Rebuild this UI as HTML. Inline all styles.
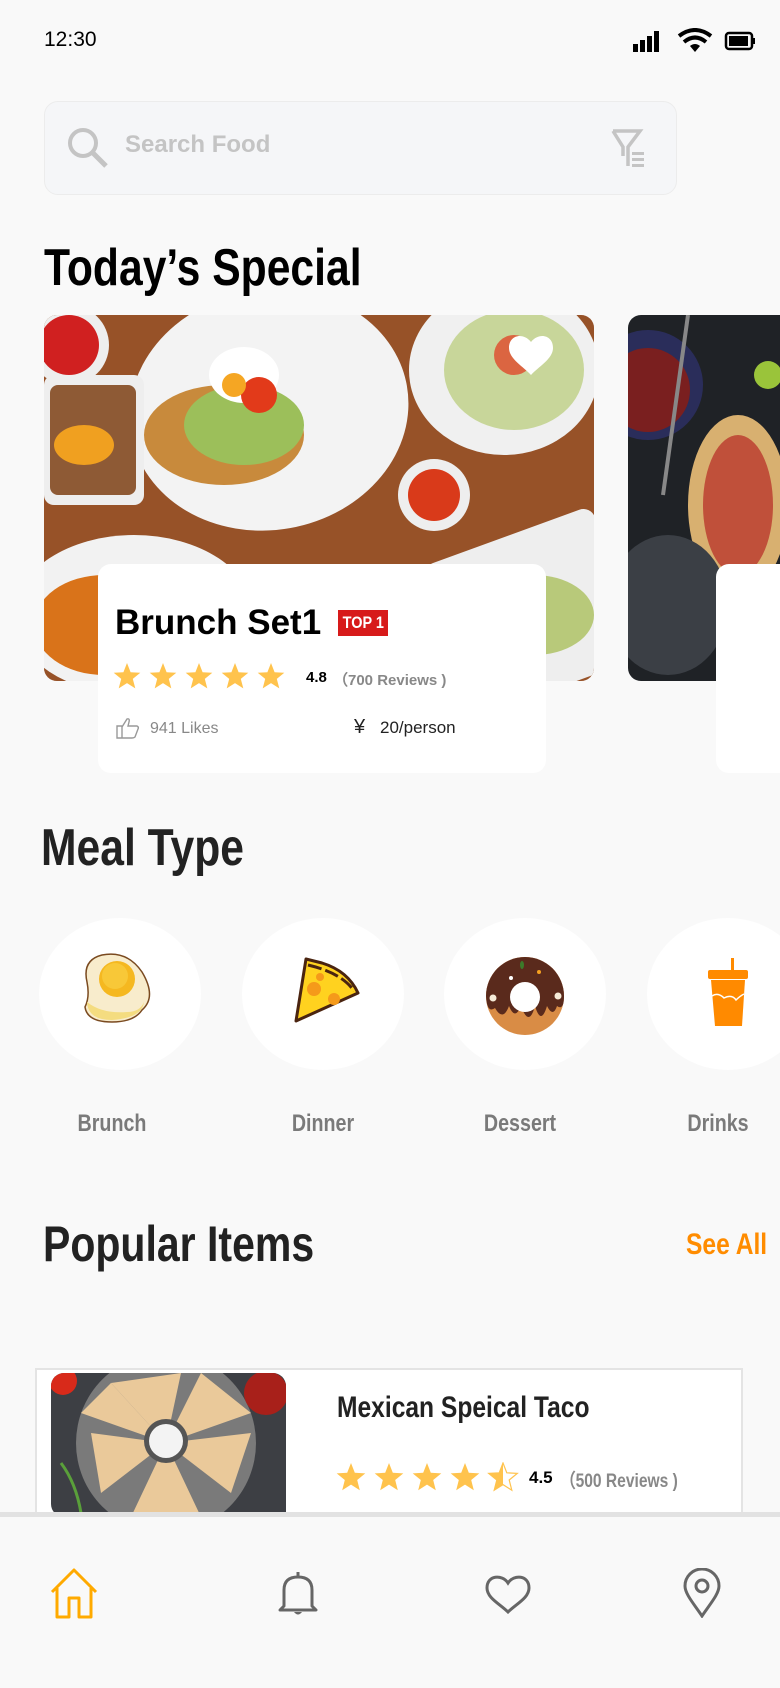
<!DOCTYPE html>
<html><head><meta charset="utf-8">
<style>
*{margin:0;padding:0;box-sizing:border-box}
body{width:780px;height:1688px;background:#f9f9f9;position:relative;overflow:hidden;font-family:"Liberation Sans",sans-serif}
.a{position:absolute}
.n{font-family:"Liberation Sans Narrow","Liberation Sans",sans-serif;font-weight:bold;white-space:nowrap}
.sx{transform:scaleX(.82);transform-origin:0 0}
.circ{position:absolute;width:162px;height:152px;border-radius:50%;background:#fff}
.lbl{position:absolute;top:1110px;width:140px;text-align:center;font-size:24px;color:#7a7a7a;transform:scaleX(.82);transform-origin:50% 0}
</style></head><body>
<div class="a" style="left:44px;top:28px;font-size:21px;color:#000">12:30</div>
<svg class="a" style="left:633px;top:28px" width="124" height="26" viewBox="0 0 124 26">
<rect x="0" y="16" width="5" height="8" fill="#000"/><rect x="7" y="12" width="5" height="12" fill="#000"/><rect x="14" y="8" width="5" height="16" fill="#000"/><rect x="21" y="3" width="5" height="21" fill="#000"/>
<path d="M46 8 Q62 -4 78 8" stroke="#000" stroke-width="4" fill="none"/><path d="M51 14 Q62 5 73 14" stroke="#000" stroke-width="4" fill="none"/><path d="M57 18 L62 24 L67 18 Q62 14 57 18Z" fill="#000"/>
<rect x="93" y="5" width="26" height="16" rx="3" stroke="#000" stroke-width="2.5" fill="none"/><rect x="96" y="8" width="19" height="10" fill="#000"/><rect x="120" y="10" width="2" height="6" fill="#000"/>
</svg>
<div class="a" style="left:44px;top:101px;width:633px;height:94px;border-radius:14px;background:#f5f6f8;border:1.5px solid #ececec"></div>
<svg class="a" style="left:66px;top:126px" width="44" height="44" viewBox="0 0 44 44"><circle cx="17" cy="17" r="13" stroke="#c4c4c4" stroke-width="4" fill="none"/><path d="M27 27 L40 40" stroke="#c4c4c4" stroke-width="5"/></svg>
<div class="a n" style="left:125px;top:131px;font-size:24px;color:#c4c4c4">Search Food</div>
<svg class="a" style="left:610px;top:128px" width="40" height="42" viewBox="0 0 40 42"><path d="M3 3 H30 L18 19 V38 M3 3 L13 19 V28" stroke="#c4c4c4" stroke-width="3.5" fill="none"/><rect x="22" y="24" width="12" height="3" fill="#c4c4c4"/><rect x="22" y="30" width="12" height="3" fill="#c4c4c4"/><rect x="22" y="36" width="12" height="3" fill="#c4c4c4"/></svg>
<div class="a n sx" style="left:44px;top:238px;font-size:52px;color:#000">Today’s Special</div>

<svg class="a" style="left:44px;top:315px;border-radius:13px" width="550" height="366" viewBox="0 0 550 366">
<rect width="550" height="366" fill="#8a4a25"/>
<rect x="0" y="0" width="550" height="366" fill="#a35a2c" opacity=".5"/>
<ellipse cx="225" cy="95" rx="140" ry="120" fill="#f3f3f3" transform="rotate(-10 225 95)"/>
<ellipse cx="180" cy="120" rx="80" ry="50" fill="#c88a3c"/>
<ellipse cx="200" cy="110" rx="60" ry="40" fill="#9cbf5a"/>
<ellipse cx="200" cy="60" rx="35" ry="28" fill="#fff"/>
<circle cx="215" cy="80" r="18" fill="#e23a1a"/><circle cx="190" cy="70" r="12" fill="#f5a623"/>
<ellipse cx="460" cy="55" rx="95" ry="85" fill="#f0f0f0"/>
<ellipse cx="470" cy="55" rx="70" ry="60" fill="#c8d69a"/><circle cx="470" cy="40" r="20" fill="#e0482a" opacity=".8"/>
<rect x="0" y="60" width="100" height="130" rx="10" fill="#eee"/><rect x="6" y="70" width="86" height="110" rx="8" fill="#8e5a35"/><ellipse cx="40" cy="130" rx="30" ry="20" fill="#f0a020"/>
<circle cx="25" cy="30" r="40" fill="#eee"/><circle cx="25" cy="30" r="30" fill="#d02020"/>
<circle cx="390" cy="180" r="36" fill="#eee"/><circle cx="390" cy="180" r="26" fill="#d93a1a"/>
<ellipse cx="90" cy="300" rx="120" ry="80" fill="#f2f2f2"/><ellipse cx="60" cy="310" rx="70" ry="50" fill="#d9731a"/>
<rect x="400" y="220" width="180" height="160" rx="12" fill="#eee" transform="rotate(-20 480 300)"/><ellipse cx="490" cy="300" rx="60" ry="40" fill="#b8c97a"/>
<path d="M487 27 C479 17 465 20 465 33 C465 44 480 52 487 60 C494 52 509 44 509 33 C509 20 495 17 487 27Z" fill="#fff"/>
</svg>
<svg class="a" style="left:628px;top:315px;border-radius:13px 0 0 13px" width="152" height="366" viewBox="0 0 152 366">
<rect width="152" height="366" fill="#1f2226"/>
<circle cx="20" cy="70" r="55" fill="#2a2d5a"/><circle cx="20" cy="75" r="42" fill="#7a1f1f"/>
<path d="M60 0 L35 180" stroke="#888" stroke-width="4"/>
<ellipse cx="110" cy="190" rx="50" ry="90" fill="#d8b070"/><ellipse cx="110" cy="190" rx="35" ry="70" fill="#c0503a"/>
<ellipse cx="40" cy="290" rx="60" ry="70" fill="#3b3f45"/><circle cx="140" cy="60" r="14" fill="#9ac43a"/>
</svg>
<div class="a" style="left:716px;top:564px;width:80px;height:209px;background:#fff;border-radius:13px"></div>

<div class="a" style="left:98px;top:564px;width:448px;height:209px;background:#fff;border-radius:13px"></div>
<div class="a" style="left:115px;top:603px;font-size:35px;font-weight:bold;color:#000;white-space:nowrap">Brunch Set1</div>
<div class="a n" style="left:338px;top:610px;width:50px;height:26px;background:#d71a1a;color:#fff;font-size:17px;line-height:26px;text-align:center"><span style="display:inline-block;transform:scaleX(.85)">TOP 1</span></div>
<svg class="a" style="left:113px;top:662px" width="180" height="30" viewBox="0 0 180 30">
<defs><path id="s" d="M14 1 L17.6 10.2 L27.3 10.7 L19.8 16.9 L22.3 26.4 L14 21.1 L5.7 26.4 L8.2 16.9 L0.7 10.7 L10.4 10.2Z" fill="#ffc34d"/></defs>
<use href="#s" x="0"/><use href="#s" x="36"/><use href="#s" x="72"/><use href="#s" x="108"/><use href="#s" x="144"/></svg>
<div class="a" style="left:306px;top:669px;font-size:15px;font-weight:bold;color:#000">4.8</div>
<div class="a" style="left:333px;top:669px;font-size:15px;font-weight:bold;color:#888;white-space:nowrap">（700 Reviews )</div>
<svg class="a" style="left:116px;top:717px" width="24" height="22" viewBox="0 0 24 22"><path d="M1 9 H6 V21 H1Z M6 10 L11 2 Q14 1 13 5 L12 9 H21 Q23 10 22 12 L19 20 Q18 21 16 21 H6" stroke="#999" stroke-width="1.4" fill="none"/></svg>
<div class="a" style="left:150px;top:720px;font-size:16px;color:#888">941 Likes</div>
<div class="a" style="left:354px;top:716px;font-size:20px;color:#222">¥</div>
<div class="a" style="left:380px;top:718px;font-size:17px;color:#222">20/person</div>

<div class="a n sx" style="left:41px;top:818px;font-size:52px;color:#222">Meal Type</div>
<div class="circ" style="left:39px;top:918px"></div>
<div class="circ" style="left:242px;top:918px"></div>
<div class="circ" style="left:444px;top:918px"></div>
<div class="circ" style="left:647px;top:918px"></div>
<svg class="a" style="left:82px;top:952px" width="74" height="74" viewBox="0 0 74 74"><path d="M20 3 Q45 -2 60 20 Q75 45 60 58 Q52 70 30 70 Q5 70 3 55 Q8 45 5 30 Q0 8 20 3Z" fill="#f8eccc" stroke="#7a4a20" stroke-width="1.5"/><path d="M5 50 Q20 62 45 60 Q58 60 62 50 Q60 66 30 68 Q6 68 5 50Z" fill="#f4dc80"/><circle cx="35" cy="27" r="18" fill="#f5b820"/><circle cx="33" cy="24" r="13" fill="#f8c838"/></svg>
<svg class="a" style="left:292px;top:955px" width="72" height="70" viewBox="0 0 72 70"><path d="M14 4 L4 66 L66 38 Q56 16 30 8 Z" fill="#ffd21f" stroke="#4a2410" stroke-width="3" stroke-linejoin="round"/><path d="M16 10 Q50 18 62 36" stroke="#4a2410" stroke-width="3" fill="none" stroke-dasharray="14 4"/><circle cx="22" cy="34" r="7" fill="#f59a1a"/><circle cx="42" cy="44" r="6" fill="#f59a1a"/><circle cx="28" cy="22" r="4" fill="#f59a1a"/></svg>
<svg class="a" style="left:485px;top:956px" width="80" height="80" viewBox="0 0 80 80"><circle cx="40" cy="40" r="39" fill="#d98c45"/><path d="M1 40 A39 39 0 0 1 79 40 Q79 55 72 50 Q68 62 62 50 Q56 70 50 50 Q44 72 36 50 Q30 65 24 50 Q18 66 10 52 Q2 58 1 40Z" fill="#5a2a1c"/><circle cx="40" cy="41" r="15" fill="#fff"/><circle cx="8" cy="42" r="3.5" fill="#f5ebd8"/><circle cx="73" cy="40" r="3.5" fill="#f5ebd8"/><ellipse cx="37" cy="9" rx="2" ry="4" fill="#3c7a2a"/><circle cx="54" cy="16" r="2" fill="#f5a020"/><circle cx="26" cy="22" r="2" fill="#fff"/></svg>
<svg class="a" style="left:706px;top:958px" width="44" height="70" viewBox="0 0 44 70"><rect x="25" y="0" width="3" height="12" fill="#ff8a00"/><rect x="2" y="12" width="40" height="9" rx="2" fill="#ff8a00"/><path d="M5 22 H39 L36 68 H9Z" fill="#ff8a00"/><path d="M6 38 Q12 34 18 40 Q26 36 30 42 Q34 38 38 36" stroke="#fff" stroke-width="1.5" fill="none"/></svg>
<div class="lbl n" style="left:42px">Brunch</div>
<div class="lbl n" style="left:253px">Dinner</div>
<div class="lbl n" style="left:450px">Dessert</div>
<div class="lbl n" style="left:648px">Drinks</div>

<div class="a n sx" style="left:43px;top:1215px;font-size:50px;color:#222">Popular Items</div>
<div class="a n sx" style="left:686px;top:1228px;font-size:30px;color:#ff8c00">See All</div>

<div class="a" style="left:35px;top:1368px;width:708px;height:152px;background:#fff;border:2px solid #e4e4e4"></div>
<svg class="a" style="left:51px;top:1373px;border-radius:13px 13px 0 13px" width="235" height="144" viewBox="0 0 235 144">
<rect width="235" height="144" fill="#3d3f44"/><circle cx="115" cy="70" r="90" fill="#7a7a7a"/>
<g fill="#eac99a"><path d="M115 70 L60 10 L130 0Z"/><path d="M115 70 L150 0 L200 40Z"/><path d="M115 70 L200 60 L180 120Z"/><path d="M115 70 L150 144 L80 144Z"/><path d="M115 70 L50 120 L40 60Z"/><path d="M115 70 L30 40 L60 10Z"/></g>
<circle cx="115" cy="68" r="22" fill="#555"/><circle cx="115" cy="68" r="17" fill="#f3f3f3"/>
<circle cx="215" cy="20" r="22" fill="#a8201a"/><circle cx="12" cy="8" r="14" fill="#d82a1a"/>
<path d="M10 90 Q25 110 30 140" stroke="#5aa03a" stroke-width="3" fill="none"/>
</svg>
<div class="a n sx" style="left:337px;top:1391px;font-size:30px;color:#222">Mexican Speical Taco</div>
<svg class="a" style="left:336px;top:1462px" width="190" height="32" viewBox="0 0 190 32">
<defs><path id="t" d="M15 1 L18.8 10.8 L29.3 11.4 L21.2 18 L23.8 28.2 L15 22.6 L6.2 28.2 L8.8 18 L0.7 11.4 L11.2 10.8Z"/></defs>
<use href="#t" x="0" fill="#ffc34d"/><use href="#t" x="38" fill="#ffc34d"/><use href="#t" x="76" fill="#ffc34d"/><use href="#t" x="114" fill="#ffc34d"/>
<use href="#t" x="152" fill="#fff" stroke="#ffc34d" stroke-width="1.2"/><path d="M167 1 L163.2 10.8 L152.7 11.4 L160.8 18 L158.2 28.2 L167 22.6Z" fill="#ffc34d"/></svg>
<div class="a n" style="left:529px;top:1468px;font-size:17px;color:#000">4.5</div>
<div class="a n sx" style="left:560px;top:1466px;font-size:19px;color:#888">（500 Reviews )</div>

<div class="a" style="left:0;top:1512px;width:780px;height:5px;background:#e2e2e2"></div>
<div class="a" style="left:0;top:1517px;width:780px;height:171px;background:#f9f9f9"></div>
<svg class="a" style="left:49px;top:1568px" width="50" height="52" viewBox="0 0 50 52"><path d="M3 24 L25 2 L47 24 M8 20 V49 H20 V30 H30 V49 H42 V20" stroke="#ffaa00" stroke-width="3" fill="none" stroke-linejoin="round"/></svg>
<svg class="a" style="left:278px;top:1570px" width="40" height="46" viewBox="0 0 40 46"><path d="M20 2 V6 M6 36 V20 Q6 7 20 7 Q34 7 34 20 V36 L38 40 H2 Z" stroke="#666" stroke-width="3" fill="none" stroke-linejoin="round"/><path d="M16 42 Q20 47 24 42Z" fill="#666"/></svg>
<svg class="a" style="left:484px;top:1574px" width="48" height="40" viewBox="0 0 48 40"><path d="M24 9 C18 0 3 1 3 14 C3 24 16 30 24 38 C32 30 45 24 45 14 C45 1 30 0 24 9Z" stroke="#666" stroke-width="3" fill="none"/></svg>
<svg class="a" style="left:682px;top:1568px" width="40" height="50" viewBox="0 0 40 50"><path d="M20 48 C12 36 3 26 3 18 A17 17 0 0 1 37 18 C37 26 28 36 20 48Z" stroke="#666" stroke-width="3" fill="none"/><circle cx="20" cy="18" r="6" stroke="#666" stroke-width="3" fill="none"/></svg>
</body></html>
